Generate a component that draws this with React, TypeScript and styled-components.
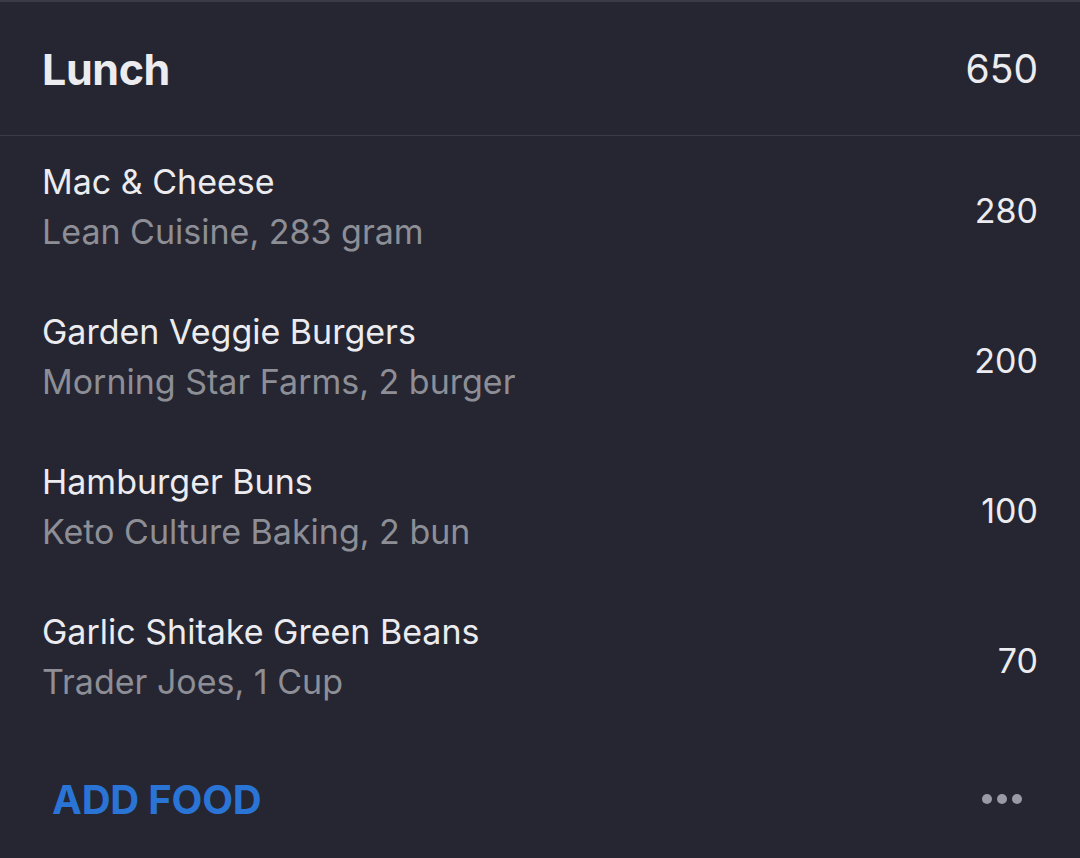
import React from "react";
import styled, { createGlobalStyle } from "styled-components";

const Global = createGlobalStyle`
  html, body { margin: 0; padding: 0; background: #252631; }
  body { font-family: Inter, "Open Sans", "Liberation Sans", sans-serif; -webkit-font-smoothing: antialiased; }
`;

const Card = styled.div`
  width: 1080px;
  height: 858px;
  overflow: hidden;
  background: #252631;
  border-top: 2px solid #393a45;
  box-sizing: border-box;
`;

const Header = styled.div`
  display: flex;
  align-items: center;
  justify-content: space-between;
  height: 133px;
  padding: 0 42px;
  border-bottom: 1px solid #3a3b46;
`;

const Title = styled.h1`
  margin: 0;
  font-size: 43px;
  font-weight: 700;
  color: #ececf0;
  letter-spacing: -0.4px;
`;

const Total = styled.span`
  font-size: 39px;
  font-weight: 400;
  color: #ececf0;
`;

const Row = styled.div`
  display: flex;
  justify-content: space-between;
  align-items: center;
  height: 150px;
  padding: 0 42px;
`;

const Info = styled.div`
  align-self: flex-start;
  padding-top: 21px;
  display: flex;
  flex-direction: column;
`;

const Name = styled.div`
  font-size: 34px;
  line-height: 50px;
  color: #ececf0;
`;

const Sub = styled.div`
  font-size: 34px;
  line-height: 50px;
  color: #8d8e96;
`;

const Cal = styled.span`
  font-size: 34px;
  line-height: 1;
  color: #ececf0;
`;

const Footer = styled.div`
  display: flex;
  align-items: center;
  justify-content: space-between;
  height: 126px;
  padding: 0 58px 0 52px;
`;

const AddButton = styled.button`
  border: 0;
  background: none;
  padding: 0;
  font-family: inherit;
  font-size: 40px;
  font-weight: 700;
  color: #2a74d6;
  letter-spacing: -0.2px;
`;

const Dots = styled.div`
  display: flex;
  gap: 5px;
`;

const Dot = styled.span`
  width: 10px;
  height: 10px;
  border-radius: 50%;
  background: #9a9aa4;
`;

const foods = [
  { name: "Mac & Cheese", sub: "Lean Cuisine, 283 gram", cal: 280 },
  { name: "Garden Veggie Burgers", sub: "Morning Star Farms, 2 burger", cal: 200 },
  { name: "Hamburger Buns", sub: "Keto Culture Baking, 2 bun", cal: 100 },
  { name: "Garlic Shitake Green Beans", sub: "Trader Joes, 1 Cup", cal: 70 },
];

export default function App() {
  return (
    <>
      <Global />
      <Card>
        <Header>
          <Title>Lunch</Title>
          <Total>650</Total>
        </Header>
        {foods.map((f) => (
          <Row key={f.name}>
            <Info>
              <Name>{f.name}</Name>
              <Sub>{f.sub}</Sub>
            </Info>
            <Cal>{f.cal}</Cal>
          </Row>
        ))}
        <Footer>
          <AddButton>ADD FOOD</AddButton>
          <Dots>
            <Dot />
            <Dot />
            <Dot />
          </Dots>
        </Footer>
      </Card>
    </>
  );
}
